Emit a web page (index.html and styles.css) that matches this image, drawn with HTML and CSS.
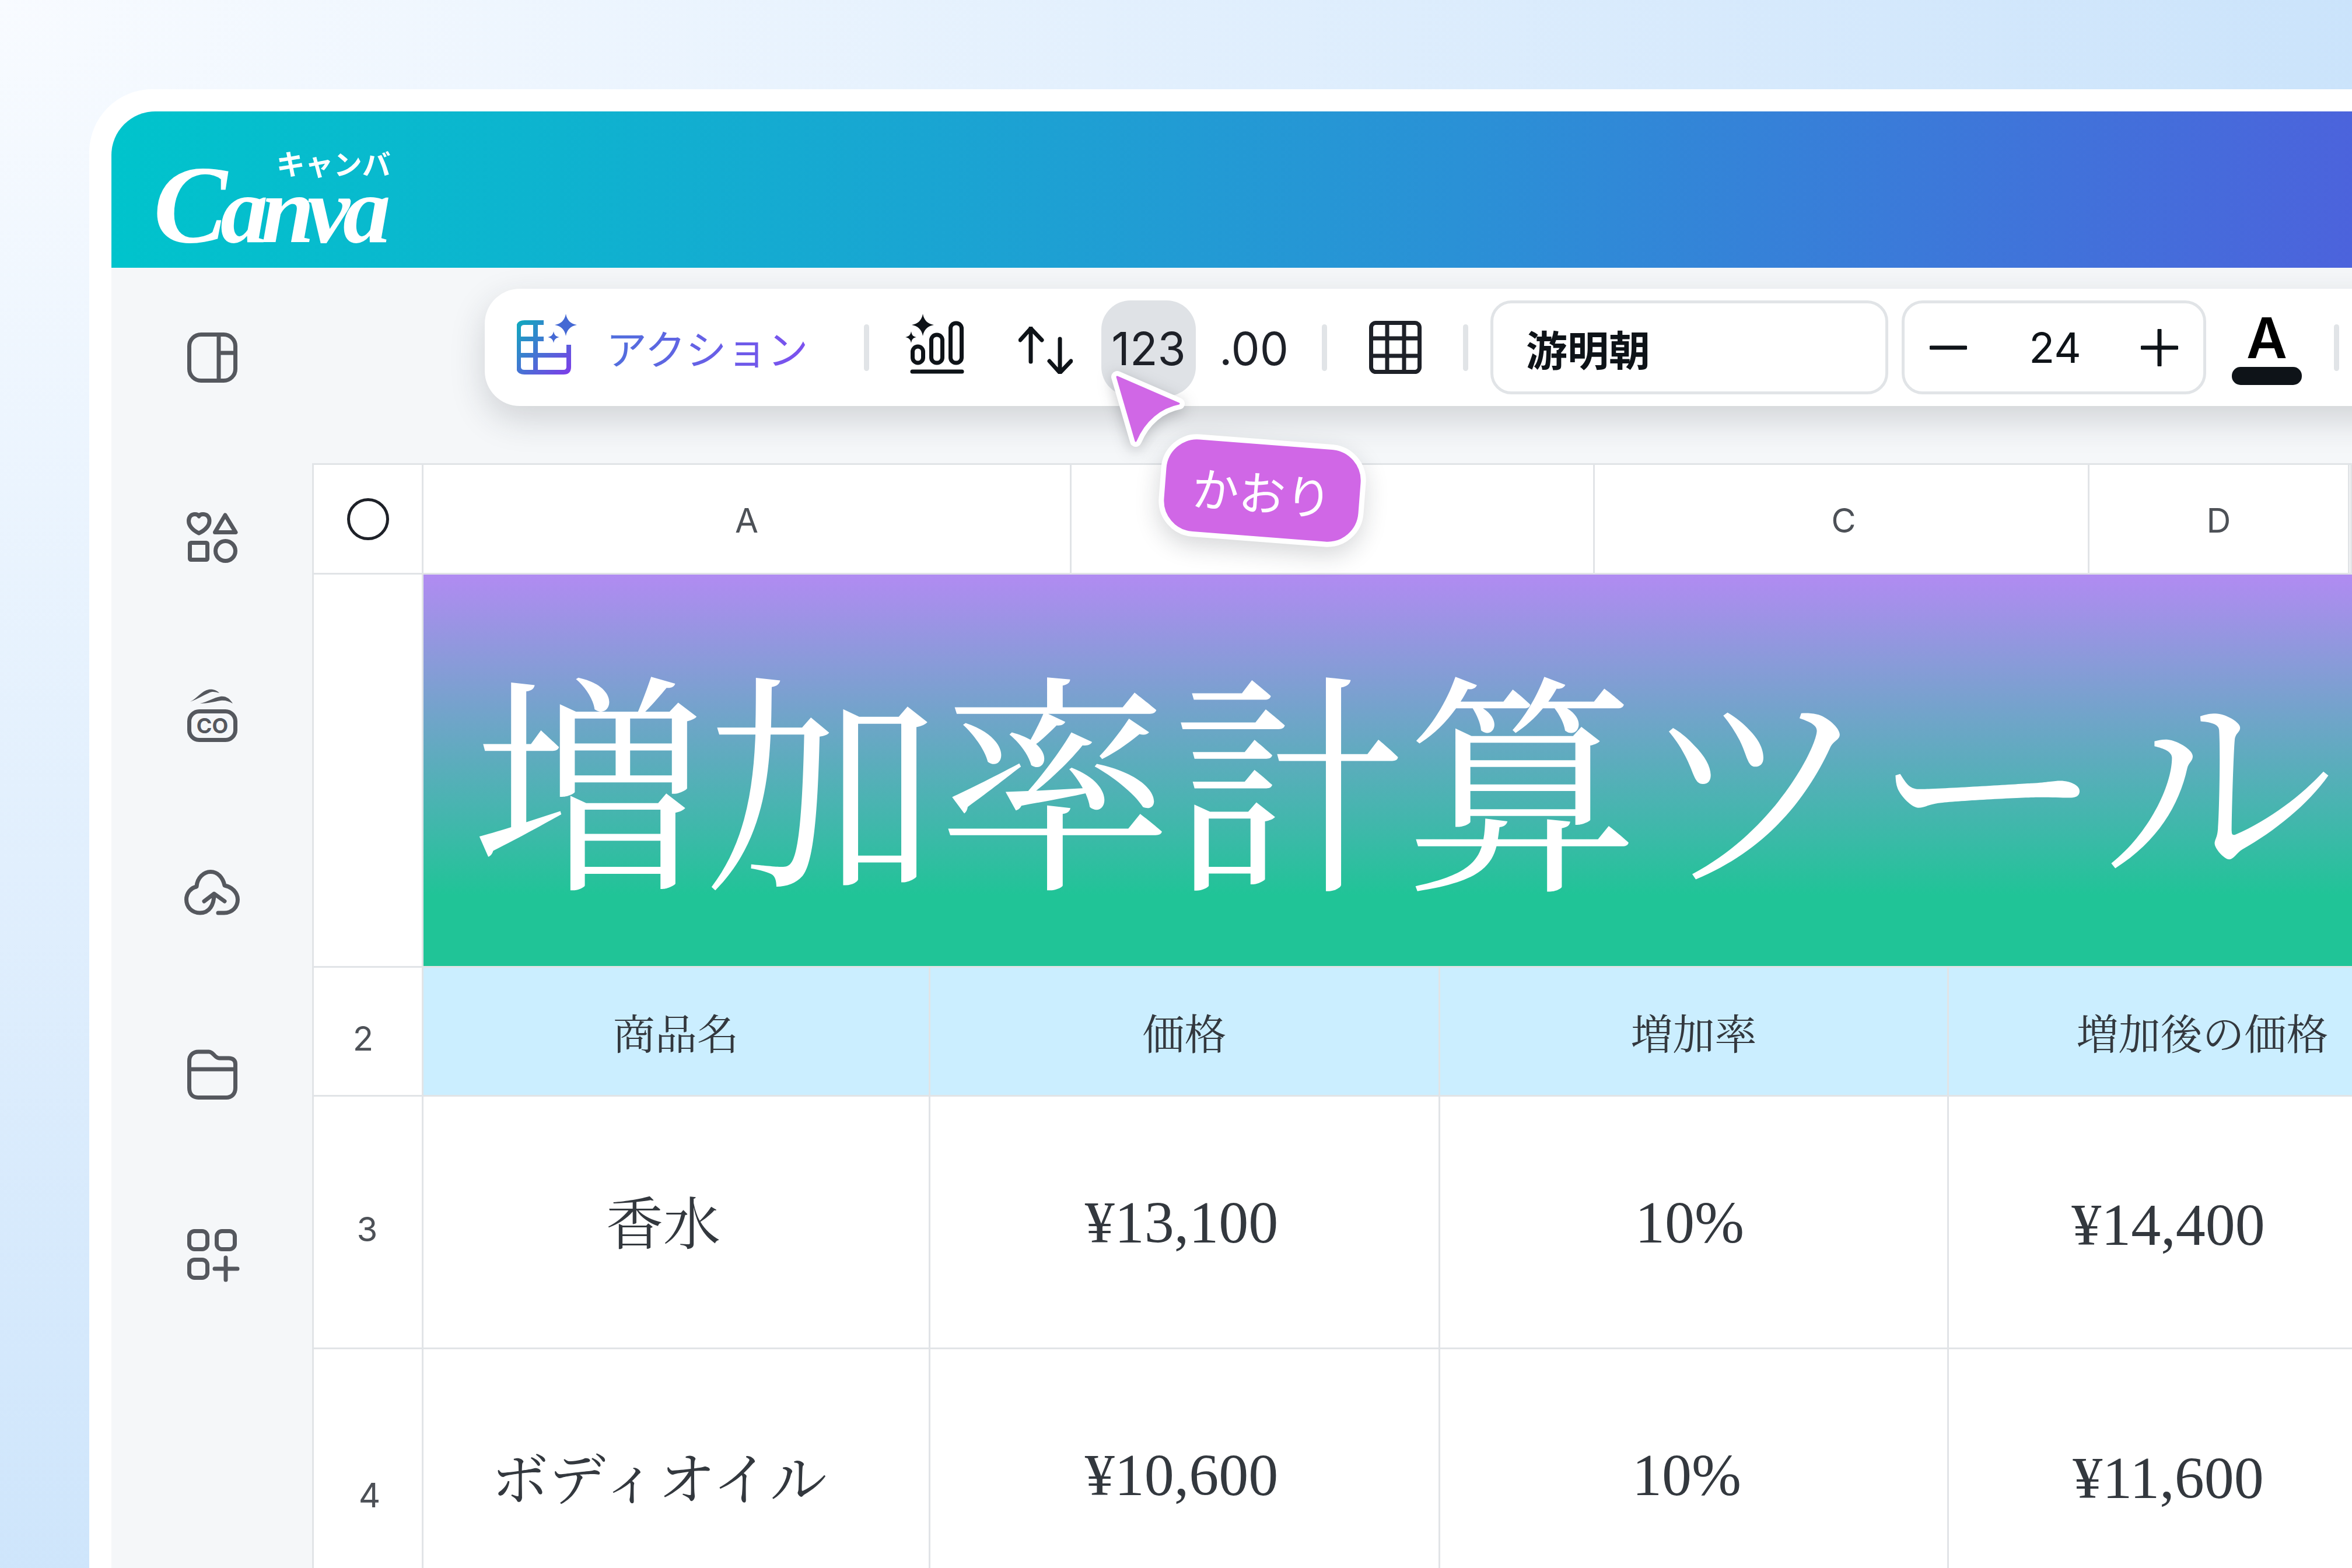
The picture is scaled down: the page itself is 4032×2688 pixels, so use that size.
FILE: index.html
```html
<!DOCTYPE html>
<html lang="ja">
<head>
  <meta charset="UTF-8">
  <title>増加率計算ツール</title>
  <link rel="stylesheet" href="styles.css">
</head>
<body>

<div class="frame">
  <div class="app">

    <header class="app-header">
      <div class="logo">
        <span class="logo-kana">キャンバ</span>
        <span class="logo-word">Canva</span>
      </div>
    </header>

    <div class="app-body">

      <nav class="sidebar">
        <svg class="side-icon" viewBox="0 0 96 96">
          <rect x="8.5" y="8.5" width="79" height="79" rx="20"/>
          <path d="M59 8.5V87.5M59 40H87.5"/>
        </svg>
        <svg class="side-icon" viewBox="0 0 96 96">
          <path d="M25 41C14 36 7.500 28 7.500 20C7.500 12 13 8.500 18 8.500C21 8.500 24 10 25 12C26 10 29 8.500 32 8.500C38 8.500 43 12 43 20C43 28 36 36 25 41Z"/>
          <path d="M70 10L88 39.500H52.500Z"/>
          <rect x="9.500" y="57.500" width="30" height="29" rx="2"/>
          <circle cx="70.500" cy="71.500" r="17"/>
        </svg>
        <svg class="side-icon" viewBox="0 0 96 96">
          <path class="solid" d="M10 22C22 16 30 3 42 1C50 0 56 3 60 7C52 5 48 4 42 7C32 11 22 18 10 22Z"/>
          <path class="solid" d="M27 25C40 22 50 15 62 13C72 12 78 17 83 25C76 21 70 19 62 20C50 22 40 25 27 25Z"/>
          <rect x="8.500" y="38.500" width="79" height="49" rx="17"/>
          <text class="co-text" x="48" y="76" text-anchor="middle">CO</text>
        </svg>
        <svg class="side-icon" viewBox="0 0 96 96">
          <path d="M34 56L51 43L69 56M51 44C51 62 43 76 27 76C13 76 3.500 66 3.500 53C3.500 42 11 33 21 31C22 15 34 5.500 45 5.500C57 5.500 66 15 69 29C81 31 91.500 41 91.500 53C91.500 66 82 76 68 76H58"/>
        </svg>
        <svg class="side-icon" viewBox="0 0 96 96">
          <path d="M8.500 22C8.500 11 16 6 24 6H42C50 6 52 17 60 17H76C84 17 87.500 21 87.500 27V68C87.500 79 80 84.500 72 84.500H24C15 84.500 8.500 79 8.500 68ZM8.500 36H87.500"/>
        </svg>
        <svg class="side-icon" viewBox="0 0 96 96">
          <rect x="8.500" y="5.500" width="31" height="31" rx="9"/>
          <rect x="55.500" y="5.500" width="31" height="31" rx="9"/>
          <rect x="8.500" y="54.500" width="31" height="31" rx="9"/>
          <path d="M52 70H91M71 51V89"/>
        </svg>
      </nav>

      <main class="main">

        <div class="toolbar">
          <svg class="action-icon" viewBox="7 7 106 108">
            <defs>
              <linearGradient id="actionGrad" gradientUnits="userSpaceOnUse" x1="10" y1="24" x2="96" y2="109">
                <stop offset="0" stop-color="#12a7bf"/>
                <stop offset="1" stop-color="#7a3fe8"/>
              </linearGradient>
            </defs>
            <path class="action-lines" d="M53 24H20Q10 24 10 33V100Q10 109 20 109H87Q96 109 96 100V62M10 52H53M10 80H96M39 24V109"/>
            <path class="action-star" d="M91 9C93 20 99 26 110 28C99 30 93 36 91 47C89 36 83 30 72 28C83 26 89 20 91 9Z"/>
            <path class="action-star" d="M70 39C71 45 74 48 80 49C74 50 71 53 70 59C69 53 66 50 60 49C66 48 69 45 70 39Z"/>
          </svg>
          <span class="action-label">アクション</span>
          <span class="sep sep-a"></span>

          <svg class="chart-icon" viewBox="12 8 102 104">
            <path class="dark-solid" d="M43 9C45 20 51 26 62 28C51 30 45 36 43 47C41 36 35 30 24 28C35 26 41 20 43 9Z"/>
            <path class="dark-solid" d="M23 39C24 45 26 48 32 49C26 50 24 53 23 59C22 53 19 50 13 49C19 48 22 45 23 39Z"/>
            <rect x="25.500" y="65" width="18" height="28" rx="9"/>
            <rect x="57.500" y="45" width="19" height="48" rx="9"/>
            <rect x="90.500" y="25" width="19" height="68" rx="9"/>
            <path d="M25 108H110"/>
          </svg>
          <svg class="sort-icon" viewBox="0 0 93 81">
            <path d="M21 2V60M3 23L21 3L40 23M71 21V79M53 59L71 79L90 59"/>
          </svg>
          <span class="chip">123</span>
          <span class="decimals">.00</span>
          <span class="sep sep-b"></span>

          <svg class="grid-icon" viewBox="0 0 90 91">
            <rect x="3.500" y="3.500" width="83" height="84" rx="8"/>
            <path d="M31 3.500V87.500M60 3.500V87.500M3.500 30H86.500M3.500 60H86.500"/>
          </svg>
          <span class="sep sep-c"></span>

          <div class="font-box">游明朝</div>

          <div class="size-box">
            <svg class="size-btn" viewBox="0 0 64 64"><path d="M2 32H62"/></svg>
            <span class="size-value">24</span>
            <svg class="size-btn" viewBox="0 0 64 64"><path d="M2 32H62M32 2V62"/></svg>
          </div>

          <div class="text-color">
            <span class="text-color-letter">A</span>
            <span class="text-color-bar"></span>
          </div>
          <span class="sep sep-d"></span>
        </div>

        <div class="sheet">
          <div class="col-heads">
            <div class="cell"><span class="select-all"></span></div>
            <div class="cell head">A</div>
            <div class="cell"></div>
            <div class="cell head head-c">C</div>
            <div class="cell head">D</div>
            <div class="cell"></div>
          </div>

          <div class="row row-banner">
            <div class="cell"></div>
            <div class="banner">増加率計算ツール</div>
          </div>

          <div class="row row-titles">
            <div class="cell row-num num-2">2</div>
            <div class="cell title">商品名</div>
            <div class="cell title">価格</div>
            <div class="cell title">増加率</div>
            <div class="cell title">増加後の価格</div>
          </div>

          <div class="row row-first">
            <div class="cell row-num num-3">3</div>
            <div class="cell value kana pr-44">香水</div>
            <div class="cell value pr-10">¥13,100</div>
            <div class="cell value pr-14">10%</div>
            <div class="cell value pr-117">¥14,400</div>
          </div>

          <div class="row row-second">
            <div class="cell row-num num-4">4</div>
            <div class="cell value kana pr-58">ボディオイル</div>
            <div class="cell value pr-10">¥10,600</div>
            <div class="cell value pr-24">10%</div>
            <div class="cell value pr-117">¥11,600</div>
          </div>
        </div>

      </main>
    </div>
  </div>
</div>

<svg class="cursor" viewBox="0 0 140 140">
  <path class="cursor-edge" d="M15 16L121 62C90 68 62 90 47 126Z"/>
  <path class="cursor-fill" d="M15 16L121 62C90 68 62 90 47 126Z"/>
</svg>
<div class="name-tag">かおり</div>

</body>
</html>
```

FILE: styles.css
```css
* {
  box-sizing: border-box;
}

body {
  margin: 0;
  width: 4032px;
  height: 2688px;
  overflow: hidden;
  padding: 153px 0 0 153px;
  background: radial-gradient(ellipse 4300px 3100px at 0 0, #f8fbff 0%, #c8e2fb 100%);
  font-family: Inter, "Noto Sans CJK JP", sans-serif;
  color: #0e1318;
}

.frame {
  width: 3879px;
  height: 2535px;
  padding: 38px 0 0 38px;
  background: #fff;
  border-radius: 108px 0 0 0;
}

.app {
  height: 100%;
  display: flex;
  flex-direction: column;
  background: #f5f7f9;
  border-radius: 75px 0 0 0;
  overflow: hidden;
}

/* header */

.app-header {
  flex: none;
  height: 268px;
  padding: 63px 0 0 72px;
  background: linear-gradient(95deg, #00c4cc 0%, #2a91d6 60%, #4c63dc 100%);
}

.logo {
  display: inline-flex;
  flex-direction: column;
  align-items: flex-end;
  color: #fff;
}

.logo-kana {
  font-family: "Noto Sans CJK JP", sans-serif;
  font-weight: 700;
  font-size: 49px;
  line-height: 50px;
}

.logo-word {
  margin-top: -48px;
  font-family: "Liberation Serif", serif;
  font-style: italic;
  font-weight: 700;
  font-size: 164px;
  line-height: 190px;
  letter-spacing: -12px;
  padding-right: 12px;
}

.logo-word::first-letter {
  font-size: 190px;
}

.app-body {
  flex: 1;
  display: flex;
  min-height: 0;
}

/* sidebar */

.sidebar {
  flex: none;
  width: 344px;
  padding: 106px 0 0 125px;
  display: flex;
  flex-direction: column;
  gap: 212px;
}

.side-icon {
  width: 96px;
  height: 96px;
  fill: none;
  stroke: #55585e;
  stroke-width: 7;
  stroke-linecap: round;
  stroke-linejoin: round;
}

.side-icon .solid {
  fill: #55585e;
  stroke: none;
}

.co-text {
  font-family: Inter, sans-serif;
  font-weight: 700;
  font-size: 36px;
  fill: #55585e;
  stroke: none;
}

/* toolbar */

.main {
  flex: 1;
  min-width: 0;
  display: flex;
  flex-direction: column;
}

.toolbar {
  flex: none;
  width: 3300px;
  height: 201px;
  margin: 36px 0 0 296px;
  padding-left: 55px;
  display: flex;
  align-items: center;
  background: #fff;
  border-radius: 60px;
  box-shadow: 0 22px 60px rgba(40, 45, 55, 0.18);
}

.action-icon {
  flex: none;
  width: 106px;
  height: 108px;
  margin-top: -11px;
}

.action-lines {
  fill: none;
  stroke: url(#actionGrad);
  stroke-width: 8;
}

.action-star {
  fill: #4569d4;
}

.action-label {
  flex: none;
  width: 350px;
  margin-left: 47px;
  font-family: "Noto Sans CJK JP", sans-serif;
  font-weight: 400;
  font-size: 70px;
  white-space: nowrap;
  background: linear-gradient(100deg, #4f70dc, #7e50f0);
  -webkit-background-clip: text;
  background-clip: text;
  color: transparent;
}

.sep {
  flex: none;
  width: 9px;
  height: 80px;
  background: #e1e4e7;
  border-radius: 5px;
}

.sep-a { margin-left: 92px; }
.sep-b { margin-left: 55px; }
.sep-c { margin-left: 71px; }
.sep-d { margin-left: 55px; }

.chart-icon {
  flex: none;
  width: 102px;
  height: 104px;
  margin: -13px 0 0 61px;
  fill: none;
  stroke: #0e1318;
  stroke-width: 7;
  stroke-linecap: round;
}

.dark-solid {
  fill: #0e1318;
  stroke: none;
}

.sort-icon {
  flex: none;
  width: 93px;
  height: 81px;
  margin: 10px 0 0 93px;
  fill: none;
  stroke: #0e1318;
  stroke-width: 7;
  stroke-linecap: round;
  stroke-linejoin: round;
}

.chip {
  flex: none;
  width: 162px;
  height: 164px;
  margin: 3px 0 0 49px;
  display: flex;
  align-items: center;
  justify-content: center;
  background: #dfe2e6;
  border-radius: 50px;
  font-size: 78px;
  font-weight: 400;
  color: #1e2128;
}

.decimals {
  flex: none;
  width: 121px;
  margin: 3px 0 0 40px;
  font-size: 78px;
  color: #1e2128;
}

.grid-icon {
  flex: none;
  width: 90px;
  height: 91px;
  margin: 0 0 0 72px;
  fill: none;
  stroke: #1e2128;
  stroke-width: 7;
}

.font-box {
  flex: none;
  width: 682px;
  height: 161px;
  margin: 0 0 0 38px;
  padding-left: 56px;
  display: flex;
  align-items: center;
  border: 5px solid #e1e4e7;
  border-radius: 36px;
  font-family: "Noto Sans CJK JP", sans-serif;
  font-weight: 700;
  font-size: 71px;
}

.size-box {
  flex: none;
  width: 522px;
  height: 161px;
  margin: 0 0 0 23px;
  padding: 0 43px;
  display: flex;
  align-items: center;
  justify-content: space-between;
  border: 5px solid #e1e4e7;
  border-radius: 36px;
}

.size-value {
  font-size: 72px;
  margin-left: 4px;
}

.size-btn {
  flex: none;
  width: 64px;
  height: 64px;
  fill: none;
  stroke: #0e1318;
  stroke-width: 7;
  stroke-linecap: round;
}

.text-color {
  flex: none;
  width: 120px;
  margin: 0 0 0 44px;
  display: flex;
  flex-direction: column;
  align-items: center;
}

.text-color-letter {
  font-size: 96px;
  font-weight: 600;
  line-height: 96px;
  color: #000;
}

.text-color-bar {
  width: 120px;
  height: 31px;
  margin-top: 2px;
  background: #0e1318;
  border-radius: 15px;
}

/* sheet */

.sheet {
  flex: 1;
  margin-top: 98px;
  display: flex;
  flex-direction: column;
  background: #fff;
  border-top: 3px solid #e1e4e7;
  border-left: 3px solid #e1e4e7;
  font-family: "Liberation Serif", "Noto Serif CJK JP", "Noto Sans CJK JP", serif;
}

.col-heads,
.row {
  display: grid;
  flex: none;
}

.col-heads {
  height: 188px;
  grid-template-columns: 188px 1111px 897px 848px 446px 1fr;
  font-family: Inter, sans-serif;
  font-size: 58px;
  color: #4d5157;
}

.row {
  grid-template-columns: 188px 869px 874px 872px 872px;
}

.row-banner {
  height: 674px;
  grid-template-columns: 188px 1fr;
}

.row-titles {
  height: 221px;
  background: linear-gradient(90deg, #fff 188px, #cbeeff 188px);
}

.row-first {
  height: 433px;
}

.row-second {
  flex: 1;
}

.cell {
  display: flex;
  align-items: center;
  justify-content: center;
  border-right: 3px solid #e1e4e7;
  border-bottom: 3px solid #e1e4e7;
}

.row-second .cell {
  border-bottom: none;
}

.head {
  padding-top: 4px;
}

.head-c {
  padding-left: 8px;
}

.select-all {
  width: 72px;
  height: 72px;
  border: 5px solid #1e2128;
  border-radius: 50%;
}

.banner {
  padding: 82px 0 0 83px;
  display: flex;
  align-items: center;
  background: linear-gradient(180deg, #b18bf2 0%, #20c497 82%);
  border-bottom: 3px solid #e1e4e7;
  color: #fff;
  font-size: 400px;
  line-height: 1;
  white-space: nowrap;
}

.row-num {
  font-family: Inter, sans-serif;
  font-size: 58px;
  color: #4d5157;
}

.num-2 { padding: 24px 16px 0 0; }
.num-3 { padding: 24px 2px 0 0; }
.row-second .num-4 { align-items: flex-start; padding: 215px 0 0 6px; }

.title {
  font-size: 72px;
  color: #33383e;
}

.value {
  font-size: 102px;
  color: #33383e;
}

.kana {
  font-size: 98px;
}

.row-first .kana {
  padding-bottom: 10px;
}

.row-second .value {
  align-items: flex-start;
  padding-top: 157px;
}

.row-second .kana {
  padding-top: 145px;
}

.pr-10 { padding-right: 10px; }
.pr-14 { padding-right: 14px; }
.pr-24 { padding-right: 24px; }
.pr-44 { padding-right: 44px; }
.pr-58 { padding-right: 58px; }
.pr-117 { padding: 8px 117px 0 0; }
.row-second .pr-117 { padding-top: 162px; }

/* collaborator cursor, sits over the toolbar and the sheet */

.cursor {
  position: absolute;
  left: 1900px;
  top: 630px;
  width: 140px;
  height: 140px;
  filter: drop-shadow(0 6px 12px rgba(30, 35, 45, 0.25));
}

.cursor-edge {
  fill: #fff;
  stroke: #fff;
  stroke-width: 20;
  stroke-linejoin: round;
}

.cursor-fill {
  fill: #d067e6;
  stroke: #d067e6;
  stroke-width: 3;
  stroke-linejoin: round;
}

.name-tag {
  position: absolute;
  left: 1988px;
  top: 753px;
  width: 352px;
  height: 176px;
  display: flex;
  align-items: center;
  justify-content: center;
  background: #d067e6;
  border: 9px solid #fff;
  border-radius: 62px;
  transform: rotate(4.4deg);
  box-shadow: 0 14px 40px rgba(30, 35, 45, 0.18);
  color: #fff;
  font-family: "Noto Sans CJK JP", sans-serif;
  font-weight: 400;
  font-size: 80px;
}
```
